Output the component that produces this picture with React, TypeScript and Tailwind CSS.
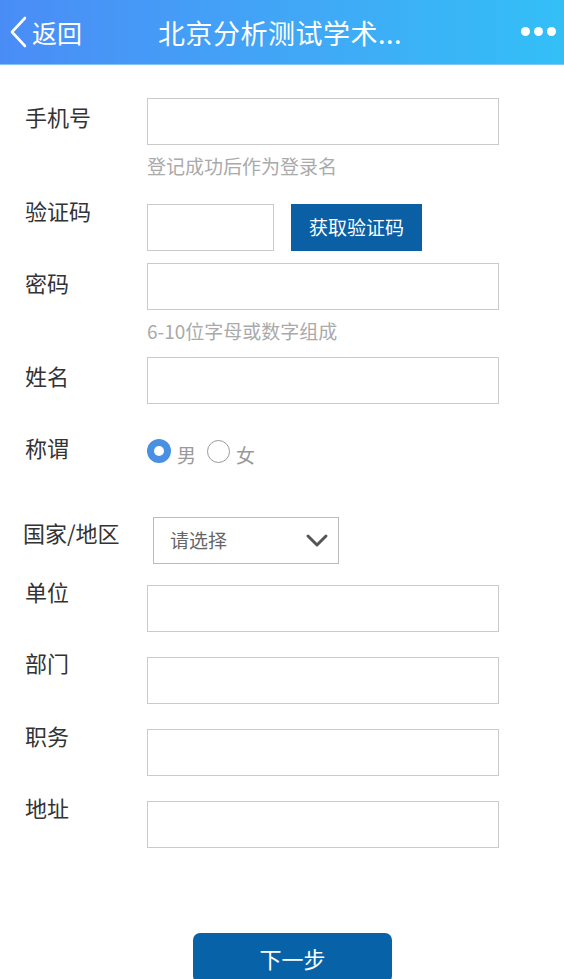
import React from "react";

const font = { fontFamily: '"Noto Sans CJK SC", "Noto Sans", sans-serif' };

function Label({ text, offset }: { text: string; offset: string }) {
  return (
    <div className={`w-[147px] shrink-0 pl-[25px] text-[22px] leading-[24px] text-[#333] ${offset}`}>
      {text}
    </div>
  );
}

function Input({ w = "w-[352px]" }: { w?: string }) {
  return <div className={`${w} h-[47px] border-[1.5px] border-[#cacaca] bg-white`} />;
}

export default function App() {
  return (
    <div className="w-[564px] min-h-[979px] bg-white" style={font}>
      {/* Header */}
      <div className="relative h-[65px] bg-gradient-to-r from-[#4a8cf6] to-[#33bff6] border-b border-[#7fc4fa] flex items-center text-white">
        <div className="flex items-center pl-[8px]">
          <svg width="20" height="32" viewBox="0 0 20 32" className="mr-[4px]">
            <path d="M17 2 L4 16 L17 30" fill="none" stroke="white" strokeWidth="2.6" strokeLinecap="round" strokeLinejoin="round" />
          </svg>
          <span className="text-[25px] leading-[30px]">返回</span>
        </div>
        <div className="absolute left-[158px] top-0 h-[65px] flex items-center text-[27px] leading-[30px] tracking-[0.5px]">
          北京分析测试学术...
        </div>
        <div className="absolute right-[8px] top-[27px] flex gap-[4px]">
          <span className="w-[9px] h-[9px] rounded-full bg-white" />
          <span className="w-[9px] h-[9px] rounded-full bg-white" />
          <span className="w-[9px] h-[9px] rounded-full bg-white" />
        </div>
      </div>

      {/* 手机号 */}
      <div className="flex mt-[33px]">
        <Label text="手机号" offset="pt-[6px]" />
        <div>
          <Input />
          <div className="mt-[10px] text-[19px] leading-[22px] text-[#aaa]">登记成功后作为登录名</div>
        </div>
      </div>

      {/* 验证码 */}
      <div className="flex mt-[27px]">
        <Label text="验证码" offset="-mt-[6px]" />
        <div className="flex">
          <Input w="w-[127px]" />
          <div className="ml-[17px] w-[131px] h-[47px] bg-[#0b5fa5] text-white text-[19px] flex items-center justify-center">
            获取验证码
          </div>
        </div>
      </div>

      {/* 密码 */}
      <div className="flex mt-[12px]">
        <Label text="密码" offset="pt-[7px]" />
        <div>
          <Input />
          <div className="mt-[10px] text-[19px] leading-[22px] text-[#aaa]">6-10位字母或数字组成</div>
        </div>
      </div>

      {/* 姓名 */}
      <div className="flex mt-[15px]">
        <Label text="姓名" offset="pt-[6px]" />
        <Input />
      </div>

      {/* 称谓 */}
      <div className="flex mt-[32px] items-start">
        <Label text="称谓" offset="-mt-[1px]" />
        <div className="flex items-center">
          <span className="w-[24px] h-[24px] rounded-full bg-[#4a90e2] flex items-center justify-center">
            <span className="w-[10px] h-[10px] rounded-full bg-white" />
          </span>
          <span className="ml-[6px] mt-[8px] text-[19px] leading-[22px] text-[#999]">男</span>
          <span className="ml-[11px] w-[23px] h-[23px] rounded-full border-[1.5px] border-[#999]" />
          <span className="ml-[6px] mt-[8px] text-[19px] leading-[22px] text-[#999]">女</span>
        </div>
      </div>

      {/* 国家/地区 */}
      <div className="flex mt-[51px]">
        <div className="w-[153px] shrink-0 pl-[23px] pt-[3px] text-[22px] leading-[24px] text-[#333]">国家/地区</div>
        <div className="w-[186px] h-[47px] border-[1.5px] border-[#bbb] flex items-center justify-between pl-[16px] pr-[9px]">
          <span className="text-[19px] text-[#666]">请选择</span>
          <svg width="24" height="16" viewBox="0 0 24 16">
            <path d="M3 3 L12 12 L21 3" fill="none" stroke="#555" strokeWidth="3" strokeLinecap="round" strokeLinejoin="round" />
          </svg>
        </div>
      </div>

      {/* 单位 */}
      <div className="flex mt-[21px]">
        <Label text="单位" offset="-mt-[6px]" />
        <Input />
      </div>
      <div className="flex mt-[25px]">
        <Label text="部门" offset="-mt-[7px]" />
        <Input />
      </div>
      <div className="flex mt-[25px]">
        <Label text="职务" offset="-mt-[6px]" />
        <Input />
      </div>
      <div className="flex mt-[25px]">
        <Label text="地址" offset="-mt-[6px]" />
        <Input />
      </div>

      <div className="flex mt-[85px] pl-[193px]">
        <div className="w-[199px] h-[50px] rounded-[7px] bg-[#0862a8] text-white text-[22px] flex items-center justify-center">
          下一步
        </div>
      </div>
    </div>
  );
}
